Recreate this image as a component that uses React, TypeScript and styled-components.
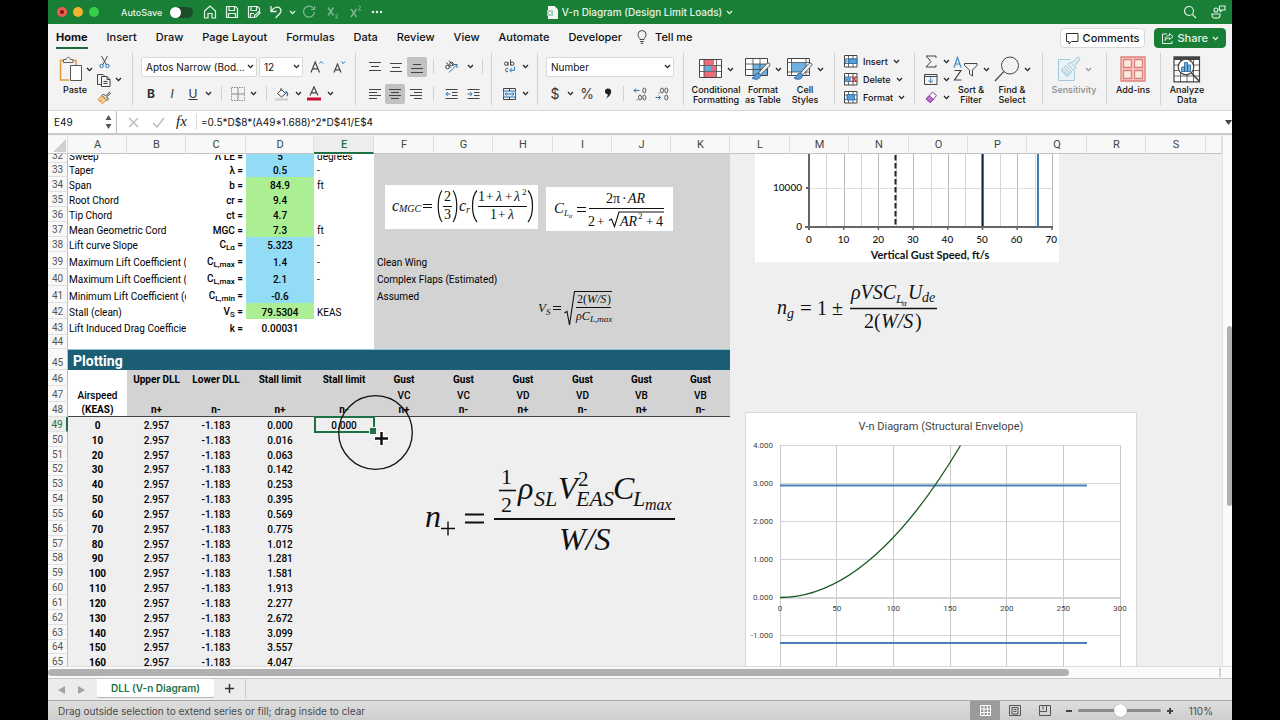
import React from 'react';
import styled, { createGlobalStyle, css } from 'styled-components';

const UI = 'Inter, "Liberation Sans", sans-serif';
const CELL = 'Roboto, "Liberation Sans", sans-serif';
const MATH = '"Liberation Serif", serif';

const GlobalStyle = createGlobalStyle`
  * { box-sizing: border-box; }
  body { margin: 0; background: #000; font-family: ${UI}; color: #111; }
  button, input, select { font-family: inherit; color: inherit; margin: 0; }
  svg { display: block; flex: none; }
`;

const Window = styled.div`
  display: flex;
  flex-direction: column;
  height: 100vh;
  margin: 0 48px;
  background: #f3f3f3;
  overflow: hidden;
`;

/* ---------- title bar ---------- */

const TitleBar = styled.header`
  display: grid;
  grid-template-columns: 1fr auto 1fr;
  align-items: center;
  flex: none;
  height: 24px;
  background: #197f37;
  color: #e6f3e9;
`;

const TitleLeft = styled.div`
  display: flex;
  align-items: center;
  padding-left: 9px;
`;

const Light = styled.button<{ $color: string }>`
  width: 10px;
  height: 10px;
  margin-right: 6px;
  padding: 3px;
  border: 0;
  border-radius: 50%;
  background: ${(p) => p.$color};
`;

const LightDot = styled.span`
  display: block;
  width: 4px;
  height: 4px;
  border-radius: 50%;
  background: #7c1712;
`;

const AutoSave = styled.label`
  display: flex;
  align-items: center;
  gap: 8px;
  margin: 0 6px 0 16px;
  font-size: 9px;
  font-weight: 500;
`;

const Toggle = styled.input`
  appearance: none;
  width: 23px;
  height: 11px;
  margin: 0;
  border-radius: 6px;
  background: #1b4d2b;
  &::before {
    content: '';
    display: block;
    width: 11px;
    height: 11px;
    border-radius: 50%;
    background: #fff;
  }
`;

const BarButton = styled.button<{ $w?: number; $dim?: boolean }>`
  display: flex;
  align-items: center;
  justify-content: center;
  width: ${(p) => p.$w ?? 22}px;
  height: 20px;
  padding: 0;
  border: 0;
  background: none;
  color: inherit;
  font-size: 11px;
  opacity: ${(p) => (p.$dim ? 0.5 : 1)};
`;

const DocTitle = styled.button`
  display: flex;
  align-items: center;
  gap: 4px;
  padding: 0;
  border: 0;
  background: none;
  color: inherit;
  font-size: 10px;
  font-weight: 500;
`;

const TitleRight = styled.div`
  display: flex;
  justify-content: flex-end;
  gap: 6px;
  padding-right: 3px;
`;

/* ---------- ribbon ---------- */

const TabRow = styled.nav`
  display: flex;
  align-items: center;
  flex: none;
  gap: 19px;
  height: 28px;
  padding: 0 6px 0 8px;
`;

const Tab = styled.button<{ $active?: boolean }>`
  height: 22px;
  padding: 0;
  border: 0;
  border-bottom: 2px solid ${(p) => (p.$active ? '#176b38' : 'transparent')};
  background: none;
  font-size: 11px;
  font-weight: ${(p) => (p.$active ? 700 : 500)};
  white-space: nowrap;
`;

const TellMe = styled(Tab)`
  display: flex;
  align-items: center;
  gap: 8px;
  margin-left: -4px;
`;

const TabActions = styled.div`
  display: flex;
  gap: 9px;
  margin-left: auto;
`;

const PillButton = styled.button<{ $primary?: boolean }>`
  display: flex;
  align-items: center;
  gap: 4px;
  height: 20px;
  padding: 0 ${(p) => (p.$primary ? 6 : 4)}px;
  border: 1px solid ${(p) => (p.$primary ? '#197f37' : '#d8d8d8')};
  border-radius: 4px;
  background: ${(p) => (p.$primary ? '#197f37' : '#fff')};
  color: ${(p) => (p.$primary ? '#e6f3e9' : '#111')};
  font-size: 11px;
  font-weight: 500;
`;

const Ribbon = styled.div`
  display: flex;
  flex: none;
  height: 59px;
  padding-top: 1px;
  border-bottom: 1px solid #d6d6d6;
`;

const Group = styled.section<{ $w?: number; $pad?: number; $last?: boolean }>`
  display: flex;
  ${(p) => (p.$w ? `width: ${p.$w}px;` : 'flex: 1;')}
  height: 52px;
  padding-left: ${(p) => p.$pad ?? 0}px;
  border-right: ${(p) => (p.$last ? 0 : 1)}px solid #d2d2d2;
`;

const Rows = styled.div`
  display: flex;
  flex-direction: column;
`;

const ToolRow = styled.div<{ $h?: number }>`
  display: flex;
  align-items: center;
  flex: none;
  height: ${(p) => p.$h ?? 27}px;
`;

const Tool = styled.button<{ $w: number; $on?: boolean; $size?: number; $italic?: boolean }>`
  display: flex;
  align-items: center;
  justify-content: center;
  width: ${(p) => p.$w}px;
  height: 20px;
  padding: 0;
  border: 0;
  border-radius: 2px;
  background: ${(p) => (p.$on ? '#c2c2c2' : 'none')};
  color: #333;
  font-size: ${(p) => p.$size ?? 12}px;
  font-style: ${(p) => (p.$italic ? 'italic' : 'normal')};
`;

const Rule = styled.span<{ $m?: number }>`
  width: 1px;
  height: 15px;
  margin: 0 ${(p) => p.$m ?? 6}px;
  background: #d2d2d2;
`;

const SelectBox = styled.span<{ $w: number }>`
  display: flex;
  align-items: center;
  position: relative;
  width: ${(p) => p.$w}px;
  height: 20px;
  margin-right: 2px;
  border: 1px solid #d9d9d9;
  border-radius: 2px;
  background: #fff;
  svg { position: absolute; right: 2px; pointer-events: none; }
`;

const Select = styled.select`
  appearance: none;
  width: 100%;
  height: 18px;
  padding: 0 0 0 4px;
  border: 0;
  background: none;
  font-size: 10px;
  font-weight: 400;
`;

const BigTool = styled.button<{ $w: number; $dim?: boolean }>`
  display: flex;
  flex-direction: column;
  align-items: center;
  gap: 2px;
  width: ${(p) => p.$w}px;
  height: 52px;
  padding: 2px 0 0;
  border: 0;
  background: none;
  color: ${(p) => (p.$dim ? '#8c8c8c' : '#111')};
  font-size: 9px;
  font-weight: 500;
  line-height: 10px;
  text-align: center;
`;

const BigIcon = styled.span<{ $tight?: boolean }>`
  display: flex;
  align-items: center;
  gap: ${(p) => (p.$tight ? 2 : 4)}px;
  height: 28px;
`;

const LineTool = styled.button`
  display: flex;
  align-items: center;
  flex: none;
  gap: 5px;
  height: 17px;
  padding: 0;
  border: 0;
  background: none;
  font-size: 9px;
  font-weight: 500;
`;

const Stack = styled.div<{ $w: number }>`
  display: flex;
  flex-direction: column;
  align-items: flex-start;
  gap: 1px;
  width: ${(p) => p.$w}px;
`;

/* ---------- formula bar ---------- */

const FormulaBar = styled.div`
  display: flex;
  align-items: center;
  flex: none;
  height: 22px;
  background: #fff;
`;

const NameBox = styled.div`
  display: flex;
  align-items: center;
  justify-content: space-between;
  width: 69px;
  height: 22px;
  padding: 0 4px 0 6px;
  border-right: 1px solid #bdbdbd;
`;

const NameInput = styled.input`
  width: 44px;
  padding: 0;
  border: 0;
  background: none;
  font-size: 10px;
`;

const FormulaInput = styled.input`
  flex: 1;
  height: 16px;
  padding: 0 4px;
  border: 0;
  border-left: 1px solid #dadada;
  background: none;
  font-size: 10px;
`;

const PaneEdge = styled.div`
  flex: none;
  height: 3px;
  border-top: 2px solid #c9c9c9;
  background: #f3f3f3;
`;

/* ---------- sheet ---------- */

const Workspace = styled.div`
  display: flex;
  flex: 1;
  min-height: 0;
`;

const SheetPane = styled.div`
  position: relative;
  flex: 1;
  min-width: 0;
  overflow: hidden;
  background: #efefef;
`;

const Grid = styled.table`
  width: 100%;
  table-layout: fixed;
  border-collapse: separate;
  border-spacing: 0;
  font-family: ${CELL};
  font-size: 10px;
  font-weight: 500;
  line-height: 13px;
  color: #000;
`;

const ColHead = styled.th<{ $on?: boolean }>`
  height: 18px;
  padding: 0 0 0 1px;
  border-right: 1px solid #dedede;
  border-bottom: ${(p) => (p.$on ? '2px solid #1e7145' : '1px solid #c4c4c4')};
  background: ${(p) => (p.$on ? '#ededed' : '#f8f8f8')};
  color: ${(p) => (p.$on ? '#1e7145' : '#444')};
  font-size: 11px;
  font-weight: ${(p) => (p.$on ? 500 : 400)};
  overflow: hidden;
`;

const Corner = styled(ColHead)`
  svg { margin: 2px 0 0 4px; }
`;

const RowHead = styled.th<{ $h: number; $on?: boolean }>`
  height: ${(p) => p.$h}px;
  padding: 0;
  border-right: ${(p) => (p.$on ? '2px solid #1e7145' : '1px solid #bdbdbd')};
  border-bottom: 1px solid #e0e0e0;
  background: ${(p) => (p.$on ? '#ededed' : '#f8f8f8')};
  color: ${(p) => (p.$on ? '#1e7145' : '#555')};
  font-weight: 400;
  vertical-align: bottom;
`;

const fills = {
  none: 'transparent',
  white: '#fff',
  grey: '#d3d3d3',
  blue: '#92dcf5',
  green: '#abee94',
  teal: '#1b5e75',
};
type Fill = keyof typeof fills;

const Cell = styled.td<{ $fill?: Fill; $bold?: boolean; $line?: boolean }>`
  padding: 0 1px;
  background: ${(p) => fills[p.$fill ?? 'none']};
  text-align: center;
  vertical-align: bottom;
  white-space: nowrap;
  overflow: hidden;
  ${(p) => p.$bold && css`font-weight: 700;`}
  ${(p) => p.$line && css`border-bottom: 1px solid #444;`}
`;

const LabelCell = styled(Cell)`
  font-weight: 400;
  text-align: left;
`;

const SymbolCell = styled(Cell)`
  padding-right: 3px;
  text-align: right;
`;

const NoteCell = styled(LabelCell)`
  padding-left: 3px;
`;

const BannerCell = styled(Cell)`
  padding-left: 5px;
  border-top: 1px solid #8fc3d6;
  color: #fff;
  font-size: 14px;
  font-weight: 700;
  line-height: 18px;
  text-align: left;
`;

const Clip = styled.div`
  display: flex;
  flex-direction: column;
  justify-content: flex-end;
  height: 8px;
  overflow: hidden;
`;

const Sub = styled.sub`
  font-size: 8px;
  line-height: 8px;
  vertical-align: -2px;
`;

/* objects that float over the cells; coordinates are relative to the pane */
const Floating = styled.figure<{ $x: number; $y: number; $fill?: string }>`
  position: absolute;
  left: ${(p) => p.$x}px;
  top: ${(p) => p.$y}px;
  margin: 0;
  background: ${(p) => p.$fill ?? 'none'};
`;

const Selection = styled.div`
  position: absolute;
  left: 266px;
  top: 280px;
  width: 61px;
  height: 17px;
  border: 2px solid #1e7145;
  &::after {
    content: '';
    position: absolute;
    right: -3px;
    bottom: -3px;
    width: 6px;
    height: 6px;
    background: #1e7145;
    border-left: 1px solid #efefef;
    border-top: 1px solid #efefef;
  }
`;

const VScroll = styled.div`
  width: 10px;
  padding: 190px 0 0 4px;
  border-left: 1px solid #e2e2e2;
  background: #fafafa;
`;

const VThumb = styled.div`
  height: 180px;
  border-radius: 4px;
  background: #b0b0b0;
`;

const HScroll = styled.div`
  display: flex;
  align-items: center;
  flex: none;
  height: 13px;
  padding-right: 11px;
  border-top: 1px solid #dedede;
  border-bottom: 1px solid #c6c6c6;
  background: #fafafa;
`;

const HThumb = styled.div`
  width: 87%;
  height: 7px;
  border-radius: 4px;
  background: #b0b0b0;
`;

const HGrip = styled.div`
  width: 2px;
  height: 9px;
  margin-left: auto;
  background: #cfcfcf;
`;

const SheetTabs = styled.div`
  display: flex;
  flex: none;
  height: 21px;
  padding-left: 3px;
  background: #ececec;
`;

const NavArrow = styled.button`
  width: 20px;
  padding: 0;
  border: 0;
  background: none;
  svg { margin: 0 auto; }
`;

const SheetTab = styled.button`
  height: 19px;
  margin-left: 6px;
  padding: 0 14px;
  border: 0;
  border-bottom: 1px solid #b5b5b5;
  border-radius: 0 0 2px 2px;
  background: #fff;
  color: #217346;
  font-size: 10px;
  font-weight: 600;
`;

const AddSheet = styled.button`
  width: 32px;
  height: 19px;
  padding: 0;
  border: 0;
  border-right: 1px solid #c9c9c9;
  background: none;
  svg { margin: 0 auto; }
`;

const StatusBar = styled.footer`
  display: flex;
  align-items: center;
  flex: none;
  height: 20px;
  padding: 0 19px 0 10px;
  border-top: 1px solid #a8a8a8;
  background: linear-gradient(#dedede, #cecece);
  color: #4a4a4a;
  font-size: 10px;
`;

const StatusText = styled.span`
  flex: 1;
`;

const ViewButton = styled.button<{ $on?: boolean }>`
  display: flex;
  align-items: center;
  justify-content: center;
  width: 30px;
  height: 20px;
  padding: 0;
  border: 0;
  background: ${(p) => (p.$on ? '#9b9b9b' : 'none')};
`;

const ZoomStep = styled.button`
  width: 18px;
  padding: 0;
  border: 0;
  background: none;
  svg { margin: 0 auto; }
`;

const ZoomSlider = styled.input`
  appearance: none;
  width: 83px;
  height: 14px;
  background: none;
  &::-webkit-slider-runnable-track {
    height: 3px;
    border-radius: 2px;
    background: #8d8d8d;
  }
  &::-webkit-slider-thumb {
    appearance: none;
    width: 13px;
    height: 13px;
    margin-top: -5px;
    border-radius: 50%;
    background: #fff;
    box-shadow: 0 0 1px #777;
  }
`;

const ZoomValue = styled.span`
  width: 34px;
  text-align: right;
`;

/* ---------- icons ---------- */

const Chev = ({ c = '#222' }: { c?: string }) => (
  <svg width="7" height="5" viewBox="0 0 7 5" fill="none" stroke={c} strokeWidth="1.3">
    <path d="M1 1l2.500 2.600L6 1" />
  </svg>
);

type IcoProps = { w?: number; h?: number; s?: string; sw?: number; children: React.ReactNode };
const Ico = ({ w = 14, h = 14, s = '#444', sw = 1, children }: IcoProps) => (
  <svg width={w} height={h} viewBox={`0 0 ${w} ${h}`} fill="none" stroke={s} strokeWidth={sw}>
    {children}
  </svg>
);

const Lines = ({ rows }: { rows: [number, number, number][] }) => (
  <Ico w={12} h={12} s="#444">
    {rows.map(([y, a, b]) => (
      <path key={y} d={`M${a} ${y + 0.5}H${b}`} />
    ))}
  </Ico>
);

const Brush = () => (
  <>
    <path d="M24.500 6.500c-1.200-1.200-3 .2-4 1.500L13.500 16l2 1.800L23.500 10c1-1.200 2-2.500 1-3.500z" fill="#f3f3f3" stroke="#555" />
    <path d="M13.200 16c-4-.2-2.200 4.300-6.200 5 3.500 2.500 8.800 1.300 8.500-3z" fill="#5a9bd5" stroke="#2e6fa8" />
  </>
);

const PasteIcon = () => (
  <Ico w={26} h={26}>
    <path d="M6 4.500H2.500V24H11" stroke="#e59a3c" strokeWidth="1.500" />
    <path d="M14 4.500h4V9" stroke="#e59a3c" strokeWidth="1.500" />
    <path d="M5.500 6.500v-3h2.700c.4-3 3.800-3 4.200 0h2.600v3z" fill="#f3f3f3" stroke="#666" />
    <path d="M12.500 9.500h11v15h-11z" fill="#fff" stroke="#555" />
  </Ico>
);

const CutIcon = () => (
  <Ico w={11} h={14}>
    <path d="M2.500 1l5 9M8.500 1l-5 9" stroke="#444" />
    <circle cx="2.500" cy="11" r="1.700" stroke="#2e75b6" />
    <circle cx="8.500" cy="11" r="1.700" stroke="#2e75b6" />
  </Ico>
);

const CopyIcon = () => (
  <Ico w={14} h={14}>
    <path d="M4.500 11.500h-4V1.500h5.500l2 2" />
    <path d="M4.500 3.500h5.500l3 3v7h-8.500zM10 3.500v3h3M6.500 8.500h4M6.500 10.500h4" />
  </Ico>
);

const FormatPainterIcon = () => (
  <Ico w={14} h={13}>
    <path d="M12.500 1.200L8.500 5l-2-2-1.500 1.500 5 5 1.500-1.500-2-2 4-3.500z" fill="#eee" />
    <path d="M4.500 5L1 8.500l4.500 4L9.500 9z" fill="#f5d3a4" stroke="#d98a2c" />
    <path d="M3 10.500l2.500-2" stroke="#d98a2c" />
  </Ico>
);

const BorderIcon = () => (
  <Ico s="#888">
    <path d="M.5.5h13v13H.5z" strokeDasharray="1.500 1" />
    <path d="M7 1v12M1 7h12" />
  </Ico>
);

const FillIcon = () => (
  <Ico w={14} h={14}>
    <path d="M6 1v3M2.500 6.500L6.500 2.500l4 4-4 3.500z" />
    <path d="M10.500 4.500c2 1 2.500 3 1.500 4.500" stroke="#2e75b6" strokeWidth="1.500" />
    <path d="M0 12.500h13" stroke="#d0d0d0" strokeWidth="2.500" />
  </Ico>
);

const FontColorIcon = () => (
  <Ico w={14} h={15}>
    <path d="M3 9.500L7 .8l4 8.700M4.300 6.800h5.400" stroke="#444" strokeWidth="1.200" />
    <path d="M0 13h14" stroke="#c8102e" strokeWidth="3" />
  </Ico>
);

const GrowFont = ({ down }: { down?: boolean }) => (
  <Ico w={14} h={14} sw={1.2}>
    {down ? <path d="M2 12.500L5.500 4l3.500 8.500M3.200 9.800h4.600" /> : <path d="M1 12.500L5.200 2l4.300 10.500M2.500 8.800H8" />}
    <path d={down ? 'M9.500 1.500l1.800 2 1.800-2' : 'M9.500 3.500l1.800-2 1.800 2'} stroke="#2e75b6" strokeWidth="1" />
  </Ico>
);

const OrientIcon = () => (
  <Ico w={15} h={14}>
    <circle cx="3.500" cy="7" r="1.800" />
    <path d="M2.500 2.500l4 5" />
    <circle cx="7.500" cy="4" r="1.800" />
    <path d="M5 .5l4.500 5" />
    <path d="M5 12.500L13 4.500M9.500 4.500H13V8" stroke="#2e75b6" />
  </Ico>
);

const IndentIcon = ({ out }: { out?: boolean }) => (
  <Ico w={13} h={12}>
    <path d="M.5 1.500h12M7 4.500h5.500M7 7.500h5.500M.5 10.500h12" />
    <path d={out ? 'M5.500 6H1M2.800 4L.9 6l1.900 2' : 'M.5 6H5M3.200 4l1.900 2-1.900 2'} stroke="#2e75b6" />
  </Ico>
);

const WrapIcon = () => (
  <Ico w={14} h={15}>
    <circle cx="3.200" cy="4.700" r="1.700" />
    <path d="M5 3v3.500M7.500.5v6" />
    <circle cx="9.200" cy="4.700" r="1.700" />
    <path d="M5 9.700c-3-1.200-3.700 3.600 0 3" />
    <path d="M11.500 7.500v3.800H7M8.800 9.300l-2 2 2 2" stroke="#2e75b6" />
  </Ico>
);

const MergeIcon = () => (
  <Ico>
    <path d="M.5 1.500h12v11H.5z" />
    <path d="M.5 4h12v6H.5z" stroke="#2e75b6" fill="#d9ecf8" />
    <path d="M2 7h9M3.500 5.500L2 7l1.500 1.500M9.500 5.500L11 7 9.500 8.500" stroke="#2e75b6" />
    <path d="M6.500 1.500V4M6.500 10v2.500" />
  </Ico>
);

const DecimalIcon = ({ less }: { less?: boolean }) => (
  <Ico w={14} h={14} s="#555">
    <ellipse cx="11.300" cy="3.500" rx="1.500" ry="2.500" />
    <ellipse cx="11.300" cy="10.500" rx="1.500" ry="2.500" />
    <ellipse cx="7" cy={less ? 3.5 : 10.5} rx="1.500" ry="2.500" />
    <path d={less ? 'M4 5.500v1' : 'M4.200 12.500v1'} />
    <path
      d={less ? 'M.5 10.500h5M3.500 8.500l2 2-2 2' : 'M6.500 3.500H1M3 1.500l-2 2 2 2'}
      stroke="#2e75b6"
    />
  </Ico>
);

const CondIcon = () => (
  <Ico w={24} h={20}>
    <path d="M.5.5h22v18H.5z" fill="#fff" />
    <path d="M5 1h10v5H5zM5 13h12v5H5z" fill="#ee6a78" stroke="none" />
    <path d="M5 7h7v5H5z" fill="#6aa7dc" stroke="none" />
    <path d="M12 7h5v5h-5z" fill="#ee6a78" stroke="none" />
    <path d="M.5 6.500h22M.5 12.500h22M5 .5v18M17.500.5v18" strokeWidth=".8" />
  </Ico>
);

const TableIcon = () => (
  <Ico w={26} h={24}>
    <path d="M.5 1.500h22v17H.5z" fill="#fff" />
    <path d="M8 7h14v11H8z" fill="#6db0e2" stroke="none" />
    <path d="M.5 7h22M.5 12.500h22M8 1.500v17M15 1.500v17" strokeWidth=".8" />
    <Brush />
  </Ico>
);

const StylesIcon = () => (
  <Ico w={26} h={24}>
    <path d="M.5 1.500h22v17H.5z" fill="#fff" />
    <path d="M5 6h14v9H5z" fill="#6db0e2" stroke="none" />
    <path d="M.5 5.500h22M.5 15h22M4.500 1.500v17M19 1.500v17" strokeWidth=".8" />
    <Brush />
  </Ico>
);

const RowsIcon = ({ kind }: { kind: 'ins' | 'del' | 'fmt' }) => (
  <Ico w={14} h={13}>
    <path d="M.5.5h12.500v11.500H.5z" fill="#fff" />
    <path d="M.5 4h12.500M.5 8.500h12.500M4.500.5V12M9 .5V12" strokeWidth=".8" />
    {kind === 'ins' && (
      <>
        <path d="M4.500 4h8.500v4.500H4.500z" fill="#5a9bd5" stroke="#2e75b6" />
        <path d="M5 6.200H.5M2.500 4.200l-2 2 2 2" stroke="#2e75b6" />
      </>
    )}
    {kind === 'del' && (
      <>
        <path d="M1 4h6v4.500H1z" fill="#5a9bd5" stroke="none" />
        <path d="M8 4l4.500 4.500M12.500 4L8 8.500" stroke="#d13438" strokeWidth="1.300" />
      </>
    )}
    {kind === 'fmt' && <path d="M3 3.500h7.500v5.500H3z" fill="#5a9bd5" stroke="#2e75b6" />}
  </Ico>
);

const FillDownIcon = () => (
  <Ico w={14} h={13}>
    <path d="M.5 1.500h12.500v10H.5zM.5 3.500h12.500" />
    <path d="M6.700 4.500v5M4.500 7.500l2.200 2.200 2.200-2.200" stroke="#2e75b6" />
  </Ico>
);

const ClearIcon = () => (
  <Ico w={14} h={13}>
    <path d="M8.500 1l4 3.500-6 7L2 8z" fill="#fff" stroke="#8a3a9c" />
    <path d="M5 4.800l4.300 3.500-2.800 3.200L2 8z" fill="#c56bd3" stroke="#8a3a9c" />
  </Ico>
);

const SortIcon = () => (
  <Ico w={26} h={26}>
    <path d="M1 11.500L4.500 1.500 8 11.500M2.200 8h4.600" stroke="#3b8bc4" strokeWidth="1.200" />
    <path d="M1.500 14.500H8L1.500 24H8.500" strokeWidth="1.200" />
    <path d="M11.500 7.500h12.500v2L19.500 14v6l-3-2v-4l-5-4.500z" />
  </Ico>
);

const FindIcon = () => (
  <Ico w={26} h={26}>
    <circle cx="16" cy="9.500" r="8.500" />
    <path d="M9.800 15.700L1 25" strokeWidth="1.200" />
  </Ico>
);

const SensitivityIcon = () => (
  <Ico w={24} h={26} s="#a3c8da">
    <path d="M13 3.500H1.500v21h16V15" fill="#e9f2f6" />
    <path d="M4 14l5-4 6 6-5 4.500z" fill="#dcebf2" />
    <path d="M6 14.500l4.500 4.500M8 13l4.500 4.500" />
    <path d="M10.500 8.500l3-2.500 6 6-3 2.500z" fill="#dcebf2" />
    <path d="M15 6l2-1.500L20 1.500c2-1 3.500.8 2.500 2.500L20 7l-1.500 2.500" fill="#dcebf2" />
  </Ico>
);

const AddInsIcon = () => (
  <Ico w={26} h={26} s="#dd7f78" sw={1.3}>
    <path d="M1 1h24v24H1z" fill="#f7cfca" />
    <path d="M3.500 3.500h8v8h-8zM14.500 3.500h8v8h-8zM3.500 14.500h8v8h-8zM14.500 14.500h8v8h-8z" fill="#fbe9e0" />
  </Ico>
);

const AnalyzeIcon = () => (
  <Ico w={28} h={27}>
    <path d="M1 .8h25.500v25H1z" fill="#fff" strokeWidth="1.200" />
    <path d="M1 2.500h25.500" strokeWidth="3" />
    <path d="M1 9h25.500M1 14.500h25.500M1 20h25.500M7.500 4v22M14 4v22M20.500 4v22" strokeWidth=".8" />
    <circle cx="13" cy="11" r="7.800" fill="#fff" strokeWidth="1.200" />
    <path d="M18.500 17l7.500 8" strokeWidth="1.600" />
    <path d="M8.500 11h3v4.500h-3zM11.500 6.500h3v9h-3zM14.500 9h3v6.500h-3z" fill="#6db0e2" stroke="#2b5f8f" strokeWidth=".8" />
  </Ico>
);

/* ---------- sheet data ---------- */

type ParamRow = { n: number; h: number; label: string; sym?: React.ReactNode; val?: string; fill: Fill; unit?: string; note?: string };
const params: ParamRow[] = [
  { n: 33, h: 14, label: 'Taper', sym: 'λ =', val: '0.5', fill: 'blue', unit: '-' },
  { n: 34, h: 15, label: 'Span', sym: 'b =', val: '84.9', fill: 'green', unit: 'ft' },
  { n: 35, h: 15, label: 'Root Chord', sym: 'cr =', val: '9.4', fill: 'green' },
  { n: 36, h: 15, label: 'Tip Chord', sym: 'ct =', val: '4.7', fill: 'green' },
  { n: 37, h: 15, label: 'Mean Geometric Cord', sym: 'MGC =', val: '7.3', fill: 'green', unit: 'ft' },
  { n: 38, h: 15, label: 'Lift curve Slope', sym: <>C<Sub>Lα</Sub> =</>, val: '5.323', fill: 'blue', unit: '-' },
  { n: 39, h: 17, label: 'Maximum Lift Coefficient (Clean)', sym: <>C<Sub>L,max</Sub> =</>, val: '1.4', fill: 'blue', unit: '-', note: 'Clean Wing' },
  { n: 40, h: 17, label: 'Maximum Lift Coefficient (Flaps)', sym: <>C<Sub>L,max</Sub> =</>, val: '2.1', fill: 'blue', unit: '-', note: 'Complex Flaps (Estimated)' },
  { n: 41, h: 17, label: 'Minimum Lift Coefficient (clean)', sym: <>C<Sub>L,min</Sub> =</>, val: '-0.6', fill: 'blue', note: 'Assumed' },
  { n: 42, h: 16, label: 'Stall (clean)', sym: <>V<Sub>S</Sub> =</>, val: '79.5304', fill: 'green', unit: 'KEAS' },
  { n: 43, h: 16, label: 'Lift Induced Drag Coefficient', sym: 'k =', val: '0.00031', fill: 'white' },
  { n: 44, h: 14, label: '', fill: 'white' },
];

const stall = ['0.000', '0.016', '0.063', '0.142', '0.253', '0.395', '0.569', '0.775', '1.012', '1.281', '1.581', '1.913', '2.277', '2.672', '3.099', '3.557', '4.047'];
const shortRows = [3, 9, 15];

const columns: [string, number | undefined][] = [
  ['A', 59], ['B', 59], ['C', 60], ['D', 68], ['E', 60], ['F', 60], ['G', 59], ['H', 60], ['I', 59], ['J', 59],
  ['K', 59], ['L', 60], ['M', 59], ['N', 60], ['O', 59], ['P', 59], ['Q', 60], ['R', 59], ['S', 60], ['', undefined],
];

const heads = ['Upper DLL', 'Lower DLL', 'Stall limit', 'Stall limit', 'Gust', 'Gust', 'Gust', 'Gust', 'Gust', 'Gust'];
const gust = ['VC', 'VC', 'VD', 'VD', 'VB', 'VB'];
const signs = ['n+', 'n-', 'n+', 'n-', 'n+', 'n-', 'n+', 'n-', 'n+', 'n-'];

const SheetGrid = () => (
  <Grid>
    <colgroup>
      <col width="20" />
      {columns.map(([c, w]) => (
        <col key={c} width={w} />
      ))}
    </colgroup>
    <thead>
      <tr>
        <Corner>
          <svg width="13" height="13"><path d="M13 0v13H0z" fill="#cfcfcf" /></svg>
        </Corner>
        {columns.map(([c]) => (
          <ColHead key={c} $on={c === 'E'} scope="col">{c}</ColHead>
        ))}
      </tr>
    </thead>
    <tbody>
      <tr>
        <RowHead $h={9} scope="row"><Clip>32</Clip></RowHead>
        <LabelCell $fill="white" colSpan={2}><Clip>Sweep</Clip></LabelCell>
        <SymbolCell $fill="white"><Clip>Λ LE =</Clip></SymbolCell>
        <Cell $fill="blue"><Clip>5</Clip></Cell>
        <NoteCell $fill="white"><Clip>degrees</Clip></NoteCell>
        <Cell $fill="grey" colSpan={6} />
      </tr>
      {params.map((r) => (
        <tr key={r.n}>
          <RowHead $h={r.h} scope="row">{r.n}</RowHead>
          <LabelCell $fill="white" colSpan={2}>{r.label}</LabelCell>
          <SymbolCell $fill="white">{r.sym}</SymbolCell>
          <Cell $fill={r.fill}>{r.val}</Cell>
          <NoteCell $fill="white">{r.unit}</NoteCell>
          <NoteCell $fill="grey" colSpan={6}>{r.note}</NoteCell>
        </tr>
      ))}
      <tr>
        <RowHead $h={21} scope="row">45</RowHead>
        <BannerCell $fill="teal" colSpan={11}>Plotting</BannerCell>
      </tr>
      <tr>
        <RowHead $h={16} scope="row">46</RowHead>
        <Cell $fill="white" />
        {heads.map((t, i) => (
          <Cell key={i} $fill="grey" $bold>{t}</Cell>
        ))}
      </tr>
      <tr>
        <RowHead $h={16} scope="row">47</RowHead>
        <Cell $fill="white">Airspeed</Cell>
        <Cell $fill="grey" colSpan={4} />
        {gust.map((t, i) => (
          <Cell key={i} $fill="grey">{t}</Cell>
        ))}
      </tr>
      <tr>
        <RowHead $h={15} scope="row">48</RowHead>
        <Cell $fill="white" $bold $line>(KEAS)</Cell>
        {signs.map((t, i) => (
          <Cell key={i} $fill="grey" $bold $line>{t}</Cell>
        ))}
      </tr>
      {stall.map((s, i) => (
        <tr key={i}>
          <RowHead $h={shortRows.includes(i) ? 14 : 15} $on={i === 0} scope="row">{49 + i}</RowHead>
          <Cell $bold>{i * 10}</Cell>
          <Cell>2.957</Cell>
          <Cell>-1.183</Cell>
          <Cell>{s}</Cell>
          <Cell>{i === 0 ? '0.000' : ''}</Cell>
        </tr>
      ))}
    </tbody>
  </Grid>
);

/* ---------- charts ---------- */

const GustChart = () => (
  <svg width="304" height="108" viewBox="755 154 304 108" fontFamily="Lato, sans-serif" fontSize="10" fill="#111">
    {Array.from({ length: 14 }, (_, i) => {
      const x = Math.round(809 + ((i + 1) * 243) / 14) + 0.5;
      return <path key={i} d={`M${x} 154V226`} stroke={i % 2 ? '#b9b9b9' : '#d6d6d6'} />;
    })}
    <path d="M809 188.500H1052" stroke="#dedede" />
    <path d="M809 154V230M805 227H1053M806 188H809" stroke="#666" strokeWidth="2" fill="none" />
    {[10, 20, 30, 40, 50, 60, 70].map((v) => (
      <path key={v} d={`M${809 + v * 3.47} 226V230`} stroke="#666" strokeWidth="1.500" />
    ))}
    <path d="M895.500 155V226" stroke="#14233f" strokeWidth="2" strokeDasharray="5.500 2.500" />
    <path d="M982.500 154V226" stroke="#0d1f45" strokeWidth="2" />
    <path d="M1038 154V226" stroke="#3f7cad" strokeWidth="2" />
    <g textAnchor="middle" fontWeight="500">
      {[0, 10, 20, 30, 40, 50, 60, 70].map((v) => (
        <text key={v} x={809 + v * 3.46} y="243">{v}</text>
      ))}
    </g>
    <text x="802" y="191" textAnchor="end" fontWeight="500">10000</text>
    <text x="802" y="230" textAnchor="end" fontWeight="500">0</text>
    <text x="930" y="259" textAnchor="middle" fontSize="11" fontWeight="700">Vertical Gust Speed, ft/s</text>
  </svg>
);

const EnvelopeChart = () => (
  <svg width="392" height="300" viewBox="745 412 392 300" fontFamily={CELL} fontSize="8" fill="#444">
    <path d="M745.500 412.500H1136.500V711.500H745.500z" fill="#fff" stroke="#d6d6d6" />
    {[445, 483, 521, 559, 635, 673].map((y) => (
      <path key={y} d={`M780 ${y + 0.5}H1120`} stroke="#d4d4d4" />
    ))}
    <path d="M780 598H1120" stroke="#c6c6c6" strokeWidth="1.500" />
    {[780, 836, 893, 950, 1006, 1063, 1120].map((x) => (
      <path key={x} d={`M${x + 0.5} 445V700`} stroke="#cbcbcb" />
    ))}
    <path d="M780 485.500H1087M780 643H1087" stroke="#4a80b8" strokeWidth="2" />
    <path d="M780 597.500Q870 597.500 960.500 445.500" fill="none" stroke="#14591f" strokeWidth="1.300" />
    <text x="941" y="430" textAnchor="middle" fontSize="11">V-n Diagram (Structural Envelope)</text>
    <g textAnchor="end">
      {['4.000', '3.000', '2.000', '1.000', '0.000', '-1.000'].map((t, i) => (
        <text key={t} x="773" y={448 + i * 38}>{t}</text>
      ))}
    </g>
    <g textAnchor="middle">
      {[0, 50, 100, 150, 200, 250, 300].map((v) => (
        <text key={v} x={780 + (v * 340) / 300} y="611">{v}</text>
      ))}
    </g>
  </svg>
);

/* ---------- equations ---------- */

type Glyph = [text: string, x: number, y: number, size: number, upright?: boolean];
type EqProps = { box: [number, number, number, number]; glyphs: Glyph[]; strokes: [string, number][] };
const Equation = ({ box: [x, y, w, h], glyphs, strokes }: EqProps) => (
  <svg width={w} height={h} viewBox={`${x} ${y} ${w} ${h}`} fontFamily={MATH} fill="#111">
    {glyphs.map(([t, gx, gy, size, up], i) => (
      <text key={i} x={gx} y={gy} fontSize={size} fontStyle={up ? 'normal' : 'italic'}>{t}</text>
    ))}
    {strokes.map(([d, sw]) => (
      <path key={d} d={d} fill="none" stroke="#111" strokeWidth={sw} />
    ))}
  </svg>
);

const EqChord = () => (
  <Equation
    box={[385, 185, 153, 44]}
    glyphs={[
      ['c', 392, 211, 16], ['MGC', 399, 212, 10], ['2', 444, 201, 14, true], ['3', 444, 219, 14, true],
      ['c', 459, 211, 16], ['r', 466, 213, 10], ['1', 478, 201, 14, true], ['+', 486, 201, 13, true], ['λ', 496, 201, 14],
      ['+', 505, 201, 13, true], ['λ', 514, 201, 14], ['2', 522, 195, 9, true],
      ['1', 490, 219, 14, true], ['+', 498, 219, 13, true], ['λ', 508, 219, 14],
    ]}
    strokes={[
      ['M423 204.500H432M423 207.500H432', 1],
      ['M443 206.500H452M478 206.500H527', 1],
      ['M442 190.500C437 197 437 215 442 222', 1.2],
      ['M453 190.500C458 197 458 215 453 222', 1.2],
      ['M477 190.500C471 197 471 215 477 222', 1.2],
      ['M528 190.500C534 197 534 215 528 222', 1.2],
    ]}
  />
);

const EqSlope = () => (
  <Equation
    box={[546, 187, 127, 44]}
    glyphs={[
      ['C', 554, 213, 15], ['L', 564, 216, 9], ['α', 569, 218, 6],
      ['2π', 606, 203, 14, true], ['·', 622, 203, 14, true], ['AR', 628, 203, 14],
      ['2', 588, 226, 14, true], ['+', 597, 226, 13, true], ['AR', 620, 226, 14], ['2', 638, 219, 9, true],
      ['+', 646, 226, 13, true], ['4', 656, 226, 14, true],
    ]}
    strokes={[
      ['M577 207.500H586M577 211.500H586', 1],
      ['M589 208.500H664', 1],
      ['M609 220.500L611.500 219L614.500 226.500L619 212H664', 1.1],
    ]}
  />
);

const EqStall = () => (
  <Equation
    box={[536, 288, 80, 40]}
    glyphs={[
      ['V', 538, 312, 13], ['S', 546, 315, 9], ['2(', 577, 303, 12, true], ['W/S', 587, 303, 12], [')', 607, 303, 12, true],
      ['ρC', 576, 320, 12], ['L,max', 590, 322, 9],
    ]}
    strokes={[
      ['M553 306.500H561M553 309.500H561', 1],
      ['M564.500 313L567 311.500L569.500 325L574.500 291.500H612', 1.1],
      ['M576 307.500H611', 1],
    ]}
  />
);

const EqGust = () => (
  <Equation
    box={[774, 278, 168, 58]}
    glyphs={[
      ['n', 777, 314, 20], ['g', 787, 318, 14], ['=', 800, 315, 21, true], ['1', 817, 315, 20, true], ['±', 832, 315, 20, true],
      ['ρVSC', 851, 299, 20], ['L', 896, 303, 13], ['α', 902, 306, 9], ['U', 908, 299, 20], ['de', 922, 302, 14],
      ['2(', 864, 328, 20, true], ['W/S', 881, 328, 20], [')', 915, 328, 20, true],
    ]}
    strokes={[['M850 308.500H937', 1.3]]}
  />
);

const EqLoad = () => (
  <Equation
    box={[420, 460, 260, 96]}
    glyphs={[
      ['n', 425, 527, 32], ['1', 501, 484, 22, true], ['2', 501, 512, 22, true],
      ['ρ', 518, 499, 32], ['SL', 534, 506, 22], ['V', 558, 499, 32], ['2', 578, 486, 21, true], ['EAS', 576, 506, 22],
      ['C', 613, 499, 32], ['L', 633, 506, 22], ['max', 645, 510, 16], ['W/S', 559, 550, 32],
    ]}
    strokes={[
      ['M494 519H675', 2],
      ['M499 490.500H516', 1.6],
      ['M465 514.500H484M465 522.500H484', 1.8],
      ['M441 528.500H455M448 521.500V535.500', 1.4],
    ]}
  />
);

/* ---------- page ---------- */

const Title = () => (
  <TitleBar>
    <TitleLeft>
      <Light $color="#ee5b52" aria-label="Close"><LightDot /></Light>
      <Light $color="#f2b42f" aria-label="Minimise" />
      <Light $color="#35cf4b" aria-label="Zoom window" />
      <AutoSave>AutoSave<Toggle type="checkbox" /></AutoSave>
      <BarButton $w={22} aria-label="Home">
        <Ico w={14} h={14} s="#e6f3e9" sw={1.2}><path d="M1.500 6L7 1l5.500 5v7H9V8.500H5V13H1.500z" /></Ico>
      </BarButton>
      <BarButton aria-label="Save">
        <Ico w={14} h={14} s="#e6f3e9" sw={1.2}><path d="M1.500 1.500H10.500l2 2v9h-11zM4 1.500v4h5.500v-4M3.500 12.500v-4h7v4" /></Ico>
      </BarButton>
      <BarButton aria-label="Save as">
        <Ico w={14} h={14} s="#e6f3e9" sw={1.2}><path d="M6 12.500H1.500v-11H10.500l2 2V6M4 1.500v4h5.500v-4M3.500 12.500v-4H7M7 12.500l.5-2 4.500-4 1.200 1.200-4.200 4.300z" /></Ico>
      </BarButton>
      <BarButton aria-label="Undo">
        <Ico w={14} h={14} s="#e6f3e9" sw={1.3}><path d="M2 1v5.500h5.500M2.200 6.300C4.500 2.500 8.500 1 11 3.200c2.500 2.500.8 4.800-4.500 9.800" /></Ico>
      </BarButton>
      <BarButton $w={10} aria-label="Undo list"><Chev c="#e6f3e9" /></BarButton>
      <BarButton $w={24} $dim aria-label="Redo">
        <Ico w={14} h={14} s="#e6f3e9" sw={1.2}><path d="M11.500 3.500A5.500 5.500 0 1 0 12.500 7M12.500 1v3.500H9" /></Ico>
      </BarButton>
      <BarButton $w={24} $dim aria-label="Subscript">
        <Ico w={14} h={14} s="#e6f3e9" sw={1.4}><path d="M2 2.500l5.500 8M7.500 2.500L2 10.500" /><path d="M9.500 9.500c1-1 2.500-.2 1.800 1L9.500 13h2.700" strokeWidth=".9" /></Ico>
      </BarButton>
      <BarButton $dim aria-label="Superscript">
        <Ico w={14} h={14} s="#e6f3e9" sw={1.4}><path d="M2 4l5.500 8M7.500 4L2 12" /><path d="M9.500 1.500c1-1 2.500-.2 1.800 1L9.500 5h2.700" strokeWidth=".9" /></Ico>
      </BarButton>
      <BarButton $w={20} aria-label="More">
        <svg width="12" height="4" fill="#e6f3e9"><circle cx="2" cy="2" r="1.200" /><circle cx="6" cy="2" r="1.200" /><circle cx="10" cy="2" r="1.200" /></svg>
      </BarButton>
    </TitleLeft>
    <DocTitle>
      <svg width="11" height="13" viewBox="0 0 11 13">
        <path d="M1 0h6.500L11 3.500V13H1z" fill="#f4f8f4" />
        <path d="M0 4h6v6H0z" fill="#a5cdb0" />
        <path d="M1.500 5.500l3 3M4.500 5.500l-3 3" stroke="#fff" />
      </svg>
      V-n Diagram (Design Limit Loads)
      <Chev c="#e6f3e9" />
    </DocTitle>
    <TitleRight>
      <BarButton aria-label="Search">
        <Ico w={14} h={14} s="#e6f3e9" sw={1.2}><circle cx="6" cy="6" r="4.500" /><path d="M9.300 9.300L13 13" /></Ico>
      </BarButton>
      <BarButton aria-label="Presence">
        <Ico w={15} h={14} s="#e6f3e9" sw={1.1}>
          <circle cx="5" cy="5" r="2" /><path d="M1 9h8v1.500c0 3.500-8 3.500-8 0zM8.500 1h5.500v4h-3L9.500 6.500V5h-1z" />
        </Ico>
      </BarButton>
    </TitleRight>
  </TitleBar>
);

const RibbonTabs = () => (
  <TabRow>
    <Tab $active>Home</Tab>
    {['Insert', 'Draw', 'Page Layout', 'Formulas', 'Data', 'Review', 'View', 'Automate', 'Developer'].map((t) => (
      <Tab key={t}>{t}</Tab>
    ))}
    <TellMe>
      <Ico w={10} h={14} s="#444"><path d="M3 9.500C3 8 1 7 1 4.500a4 4 0 0 1 8 0C9 7 7 8 7 9.500zM3.200 11.500h3.600M3.700 13.300h2.600" /></Ico>
      Tell me
    </TellMe>
    <TabActions>
      <PillButton>
        <Ico w={14} h={13} s="#333"><path d="M1.500 1.500h11.500v8H6.500L4 12V9.500H1.500z" /></Ico>
        Comments
      </PillButton>
      <PillButton $primary>
        <Ico w={13} h={13} s="#e6f3e9"><path d="M6 2H1.500v9.500h9.500V9M8.500 1.500l3.500 3-3.500 3V6C6.500 6 5 6.500 4 8.500c0-3 1.500-5 4.500-5z" /></Ico>
        Share
        <Chev c="#e6f3e9" />
      </PillButton>
    </TabActions>
  </TabRow>
);

const RibbonTools = () => (
  <Ribbon>
    <Group $w={85} $pad={9}>
      <BigTool $w={36} aria-label="Paste">
        <BigIcon $tight><PasteIcon /><Chev /></BigIcon>Paste
      </BigTool>
      <Stack $w={34}>
        <ToolRow $h={17}><Tool $w={22} aria-label="Cut"><CutIcon /></Tool></ToolRow>
        <ToolRow $h={17}><Tool $w={22} aria-label="Copy"><CopyIcon /></Tool><Chev /></ToolRow>
        <ToolRow $h={17}><Tool $w={22} aria-label="Format painter"><FormatPainterIcon /></Tool></ToolRow>
      </Stack>
    </Group>

    <Group $w={223} $pad={8}>
      <Rows>
        <ToolRow>
          <SelectBox $w={116}><Select aria-label="Font"><option>Aptos Narrow (Bod...</option></Select><Chev /></SelectBox>
          <SelectBox $w={44}><Select aria-label="Font size"><option>12</option></Select><Chev /></SelectBox>
          <Tool $w={23} aria-label="Grow font"><GrowFont /></Tool>
          <Tool $w={22} aria-label="Shrink font"><GrowFont down /></Tool>
        </ToolRow>
        <ToolRow>
          <Tool $w={20} aria-label="Bold"><b>B</b></Tool>
          <Tool $w={22} $italic aria-label="Italic">I</Tool>
          <Tool $w={20} aria-label="Underline"><u>U</u></Tool>
          <Tool $w={10} aria-label="Underline style"><Chev /></Tool>
          <Rule $m={8} />
          <Tool $w={15} aria-label="Borders"><BorderIcon /></Tool>
          <Tool $w={17} aria-label="Border style"><Chev /></Tool>
          <Rule $m={4} />
          <Tool $w={22} aria-label="Fill colour"><FillIcon /></Tool>
          <Tool $w={10} aria-label="Fill colours"><Chev /></Tool>
          <Tool $w={22} aria-label="Font colour"><FontColorIcon /></Tool>
          <Tool $w={10} aria-label="Font colours"><Chev /></Tool>
        </ToolRow>
      </Rows>
    </Group>

    <Group $w={136} $pad={8}>
      <Rows>
        <ToolRow>
          <Tool $w={21} aria-label="Top align"><Lines rows={[[1, 0, 12], [5, 2, 10], [9, 0, 12]]} /></Tool>
          <Tool $w={22} aria-label="Middle align"><Lines rows={[[2, 0, 12], [6, 2, 10], [10, 0, 12]]} /></Tool>
          <Tool $w={20} $on aria-label="Bottom align"><Lines rows={[[3, 2, 10], [7, 0, 12], [11, 0, 12]]} /></Tool>
          <Rule />
          <Tool $w={22} aria-label="Orientation"><OrientIcon /></Tool>
          <Tool $w={16} aria-label="Orientation list"><Chev /></Tool>
          <Rule $m={4} />
        </ToolRow>
        <ToolRow>
          <Tool $w={21} aria-label="Align left"><Lines rows={[[1, 0, 12], [4, 0, 8], [7, 0, 12], [10, 0, 8]]} /></Tool>
          <Tool $w={20} $on aria-label="Centre"><Lines rows={[[1, 0, 12], [4, 2, 10], [7, 0, 12], [10, 2, 10]]} /></Tool>
          <Tool $w={22} aria-label="Align right"><Lines rows={[[1, 0, 12], [4, 4, 12], [7, 0, 12], [10, 4, 12]]} /></Tool>
          <Rule />
          <Tool $w={22} aria-label="Decrease indent"><IndentIcon out /></Tool>
          <Tool $w={22} aria-label="Increase indent"><IndentIcon /></Tool>
        </ToolRow>
      </Rows>
    </Group>

    <Group $w={46} $pad={8}>
      <Rows>
        <ToolRow><Tool $w={20} aria-label="Wrap text"><WrapIcon /></Tool><Tool $w={10} aria-label="Wrap list"><Chev /></Tool></ToolRow>
        <ToolRow><Tool $w={20} aria-label="Merge"><MergeIcon /></Tool><Tool $w={10} aria-label="Merge list"><Chev /></Tool></ToolRow>
      </Rows>
    </Group>

    <Group $w={146} $pad={8}>
      <Rows>
        <ToolRow>
          <SelectBox $w={128}><Select aria-label="Number format"><option>Number</option></Select><Chev /></SelectBox>
        </ToolRow>
        <ToolRow>
          <Tool $w={18} $size={14} aria-label="Currency">$</Tool>
          <Tool $w={12} aria-label="Currency list"><Chev /></Tool>
          <Tool $w={22} $size={14} aria-label="Percent">%</Tool>
          <Tool $w={20} aria-label="Comma style">
            <svg width="8" height="11"><path d="M4 .5c5 0 4 7-2 10 1.500-2 2-3 1.500-4.500C0 6 0 .5 4 .5z" fill="#222" /></svg>
          </Tool>
          <Rule $m={5} />
          <Tool $w={22} aria-label="Increase decimals"><DecimalIcon /></Tool>
          <Tool $w={22} aria-label="Decrease decimals"><DecimalIcon less /></Tool>
        </ToolRow>
      </Rows>
    </Group>

    <Group $w={151} $pad={8}>
      <BigTool $w={48}><BigIcon><CondIcon /><Chev /></BigIcon>Conditional<br />Formatting</BigTool>
      <BigTool $w={46}><BigIcon><TableIcon /><Chev /></BigIcon>Format<br />as Table</BigTool>
      <BigTool $w={38}><BigIcon><StylesIcon /><Chev /></BigIcon>Cell<br />Styles</BigTool>
    </Group>

    <Group $w={80} $pad={9}>
      <Stack $w={60}>
        <LineTool><RowsIcon kind="ins" />Insert<Chev /></LineTool>
        <LineTool><RowsIcon kind="del" />Delete<Chev /></LineTool>
        <LineTool><RowsIcon kind="fmt" />Format<Chev /></LineTool>
      </Stack>
    </Group>

    <Group $w={128} $pad={9}>
      <Stack $w={26}>
        <LineTool aria-label="AutoSum"><Ico w={14} h={13}><path d="M12 3V1H2l5 5.500L2 12h10v-2" /></Ico><Chev /></LineTool>
        <LineTool aria-label="Fill"><FillDownIcon /><Chev /></LineTool>
        <LineTool aria-label="Clear"><ClearIcon /><Chev /></LineTool>
      </Stack>
      <BigTool $w={42}><BigIcon><SortIcon /><Chev /></BigIcon>Sort &amp;<br />Filter</BigTool>
      <BigTool $w={40}><BigIcon><FindIcon /><Chev /></BigIcon>Find &amp;<br />Select</BigTool>
    </Group>

    <Group $w={64} $pad={6}>
      <BigTool $w={50} $dim><BigIcon><SensitivityIcon /><Chev c="#999" /></BigIcon>Sensitivity</BigTool>
    </Group>
    <Group $w={54} $pad={6}>
      <BigTool $w={40}><BigIcon><AddInsIcon /></BigIcon>Add-ins</BigTool>
    </Group>
    <Group $pad={6} $last>
      <BigTool $w={40}><BigIcon><AnalyzeIcon /></BigIcon>Analyze<br />Data</BigTool>
    </Group>
  </Ribbon>
);

export default function App() {
  return (
    <>
      <GlobalStyle />
      <Window>
        <Title />
        <RibbonTabs />
        <RibbonTools />
        <FormulaBar>
          <NameBox>
            <NameInput aria-label="Name box" defaultValue="E49" />
            <svg width="7" height="14" fill="#555"><path d="M3.500 0L6.500 5H.5zM3.500 14L.5 9h6z" /></svg>
          </NameBox>
          <Tool $w={32} aria-label="Cancel"><Ico w={11} h={11} s="#bdbdbd" sw={1.5}><path d="M1 1l9 9M10 1l-9 9" /></Ico></Tool>
          <Tool $w={18} aria-label="Enter"><Ico w={13} h={11} s="#bdbdbd" sw={1.5}><path d="M1 6l4 4 7-9" /></Ico></Tool>
          <Tool $w={29} aria-label="Insert function">
            <svg width="14" height="16" fontFamily={MATH} fontSize="15" fontStyle="italic" fill="#222"><text x="1" y="12">fx</text></svg>
          </Tool>
          <FormulaInput aria-label="Formula" defaultValue="=0.5*D$8*(A49*1.688)^2*D$41/E$4" />
          <Tool $w={8} aria-label="Expand formula bar"><svg width="7" height="5" fill="#444"><path d="M0 0h7L3.500 5z" /></svg></Tool>
        </FormulaBar>
        <PaneEdge />
        <Workspace>
          <SheetPane>
            <SheetGrid />
            <Floating $x={337} $y={49} $fill="#fff"><EqChord /></Floating>
            <Floating $x={498} $y={51} $fill="#fff"><EqSlope /></Floating>
            <Floating $x={488} $y={152}><EqStall /></Floating>
            <Floating $x={707} $y={18} $fill="#fff"><GustChart /></Floating>
            <Floating $x={726} $y={142}><EqGust /></Floating>
            <Floating $x={372} $y={324}><EqLoad /></Floating>
            <Floating $x={697} $y={276}><EnvelopeChart /></Floating>
            <Selection />
            <Floating $x={289} $y={258}>
              <svg width="78" height="78" viewBox="0 0 78 78" fill="none">
                <circle cx="38.500" cy="38.500" r="36.800" stroke="#111" strokeWidth="1.300" />
                <path d="M44.500 37v15M37 44.500h15" stroke="#fff" strokeWidth="5" />
                <path d="M44.500 38v13M38 44.500h13" stroke="#111" strokeWidth="2.500" />
              </svg>
            </Floating>
          </SheetPane>
          <VScroll><VThumb /></VScroll>
        </Workspace>
        <HScroll><HThumb /><HGrip /></HScroll>
        <SheetTabs>
          <NavArrow aria-label="Previous sheet"><svg width="7" height="8" fill="#a3a3a3"><path d="M7 0v8L0 4z" /></svg></NavArrow>
          <NavArrow aria-label="Next sheet"><svg width="7" height="8" fill="#a3a3a3"><path d="M0 0v8l7-4z" /></svg></NavArrow>
          <SheetTab>DLL (V-n Diagram)</SheetTab>
          <AddSheet aria-label="Add sheet"><Ico w={9} h={9} s="#333" sw={1.5}><path d="M4.500 0v9M0 4.500h9" /></Ico></AddSheet>
        </SheetTabs>
        <StatusBar>
          <StatusText>Drag outside selection to extend series or fill; drag inside to clear</StatusText>
          <ViewButton $on aria-label="Normal view"><Ico w={11} h={11} s="#fff"><path d="M.5.5h10v10H.5zM4 .5v10M7.500.5v10M.5 4h10M.5 7.500h10" /></Ico></ViewButton>
          <ViewButton aria-label="Page layout view"><Ico w={12} h={11} s="#555"><path d="M.5.5h11v10H.5zM3 2.500h6v6.500H3zM4.500 4.500h3M4.500 6.500h3" /></Ico></ViewButton>
          <ViewButton aria-label="Page break view"><Ico w={12} h={11} s="#555"><path d="M.5.5h11v10H.5zM.5 6.500h7v-6M4 .5v4" /></Ico></ViewButton>
          <ZoomStep aria-label="Zoom out"><Ico w={8} h={8} s="#444" sw={2}><path d="M1 4h6" /></Ico></ZoomStep>
          <ZoomSlider type="range" aria-label="Zoom" min={0} max={100} defaultValue={51} />
          <ZoomStep aria-label="Zoom in"><Ico w={8} h={8} s="#444" sw={2}><path d="M4 1v6M1 4h6" /></Ico></ZoomStep>
          <ZoomValue>110%</ZoomValue>
        </StatusBar>
      </Window>
    </>
  );
}
